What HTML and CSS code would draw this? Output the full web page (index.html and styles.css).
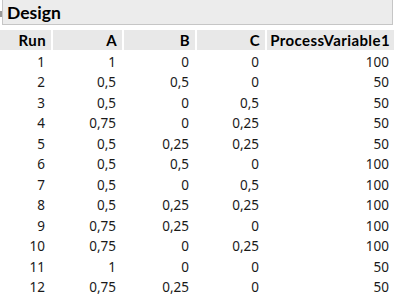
FILE: index.html
```html
<!DOCTYPE html>
<html>
<head>
<meta charset="utf-8">
<link rel="stylesheet" href="styles.css">
</head>
<body>
<div class="panel">
  <div class="title"><span class="marker"></span>Design</div>
  <table class="grid">
    <thead>
      <tr><th class="c-run">Run</th><th class="c-a">A</th><th class="c-b">B</th><th class="c-c">C</th><th class="c-pv">ProcessVariable1</th></tr>
    </thead>
    <tbody>
      <tr><td>1</td><td>1</td><td>0</td><td>0</td><td>100</td></tr>
      <tr><td>2</td><td>0,5</td><td>0,5</td><td>0</td><td>50</td></tr>
      <tr><td>3</td><td>0,5</td><td>0</td><td>0,5</td><td>50</td></tr>
      <tr><td>4</td><td>0,75</td><td>0</td><td>0,25</td><td>50</td></tr>
      <tr><td>5</td><td>0,5</td><td>0,25</td><td>0,25</td><td>50</td></tr>
      <tr><td>6</td><td>0,5</td><td>0,5</td><td>0</td><td>100</td></tr>
      <tr><td>7</td><td>0,5</td><td>0</td><td>0,5</td><td>100</td></tr>
      <tr><td>8</td><td>0,5</td><td>0,25</td><td>0,25</td><td>100</td></tr>
      <tr><td>9</td><td>0,75</td><td>0,25</td><td>0</td><td>100</td></tr>
      <tr><td>10</td><td>0,75</td><td>0</td><td>0,25</td><td>100</td></tr>
      <tr><td>11</td><td>1</td><td>0</td><td>0</td><td>50</td></tr>
      <tr><td>12</td><td>0,75</td><td>0,25</td><td>0</td><td>50</td></tr>
    </tbody>
  </table>
</div>
</body>
</html>
```
FILE: styles.css
```css
html, body {
  margin: 0;
  padding: 0;
  background: #ffffff;
}
body {
  font-family: "Noto Sans", "Open Sans", sans-serif;
  color: #1a1a1a;
  overflow: hidden;
}
.panel {
  width: 399px;
  position: relative;
}
.title {
  position: relative;
  margin: 0 6px 0 2px;
  height: 24px;
  border: 1px solid #c6c6c6;
  border-top: none;
  background: #ececec;
  font-family: "Lato", "Noto Sans", sans-serif;
  font-weight: bold;
  font-size: 17.5px;
  line-height: 26px;
  padding-left: 4px;
  color: #000;
}
.marker {
  position: absolute;
  left: -3px;
  top: 11px;
  width: 2px;
  height: 6px;
  background: #9a9a9a;
}
.grid {
  margin-top: 5px;
  border-collapse: collapse;
  table-layout: fixed;
  width: 394px;
  font-size: 13.5px;
}
.grid th,
.grid td {
  box-sizing: border-box;
}
.grid th {
  background: #e8e8e8;
  font-family: "Lato", "Noto Sans", sans-serif;
  font-weight: bold;
  font-size: 15px;
  letter-spacing: 0.4px;
  height: 19px;
  line-height: 19px;
  padding: 1px 5px 0 0;
  text-align: right;
  border-left: 2px solid #fff;
  color: #000;
}
.grid th:first-child { border-left: none; }
.grid th:last-child { padding-right: 4px; }
.c-run { width: 52px; }
.c-a { width: 71px; }
.c-b { width: 73px; }
.c-c { width: 70px; }
.grid td {
  height: 20.5px;
  padding: 0 7px 0 0;
  text-align: right;
  line-height: 20px;
}
.grid td:last-child { padding-right: 5px; }
.grid tbody tr:first-child td { padding-top: 2px; }
```
